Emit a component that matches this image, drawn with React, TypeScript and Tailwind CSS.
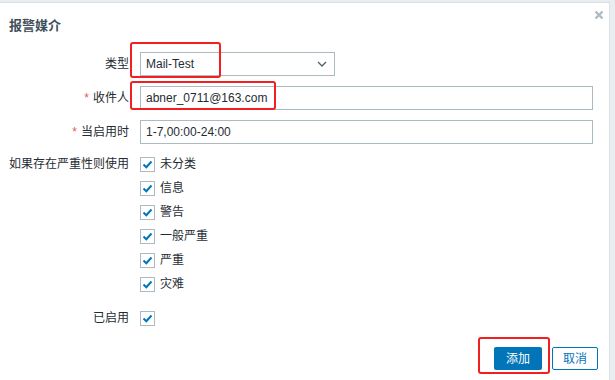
import React from 'react'

const severities = ['未分类', '信息', '警告', '一般严重', '严重', '灾难']

function CheckBox() {
  return (
    <span className="flex h-[15px] w-[15px] shrink-0 items-center justify-center border border-[#acbbc2] bg-white">
      <svg width="11" height="9" viewBox="0 0 11 9">
        <path d="M1.5 4.5 L4.3 7.2 L9.5 1.5" fill="none" stroke="#0275b8" strokeWidth="2" />
      </svg>
    </span>
  )
}

function Label({ text, required }: { text: string; required?: boolean }) {
  return (
    <div className="w-[130px] shrink-0 pr-[1px] text-right leading-[24px]">
      {required && <span className="mr-[4px] text-[#e45959]">*</span>}
      {text}
    </div>
  )
}

export default function App() {
  return (
    <div
      className="relative h-[380px] w-[615px] overflow-hidden bg-[#e9edf0] pt-[2px] pr-[5px]"
      style={{ fontFamily: '"Liberation Sans", Arial, "Noto Sans CJK SC", sans-serif' }}
    >
      <div className="relative h-[378px] border-t border-r border-[#d9dfe3] bg-white text-[12px] text-[#1f2c33]">
        {/* Header */}
        <div className="flex h-[40px] items-center pl-[9px] pt-[6px]">
          <h4 className="text-[13px] font-bold text-[#3f4f59]">报警媒介</h4>
        </div>
        <button className="absolute right-[5px] top-[7px] flex h-[10px] w-[10px] items-center justify-center">
          <svg width="10" height="10" viewBox="0 0 10 10">
            <path d="M1.5 1.5 L8.5 8.5 M8.5 1.5 L1.5 8.5" stroke="#aebbc3" strokeWidth="2.4" />
          </svg>
        </button>

        {/* Form */}
        <div className="flex flex-col pt-[9px]">
          <div className="flex items-center">
            <Label text="类型" />
            <div className="ml-[10px] flex h-[24px] w-[195px] items-center justify-between border border-[#acbbc2] pl-[5px] pr-[7px]">
              <span>Mail-Test</span>
              <svg width="10" height="6" viewBox="0 0 10 6">
                <path d="M1 1 L5 5 L9 1" fill="none" stroke="#4f5f6a" strokeWidth="1.3" />
              </svg>
            </div>
          </div>

          <div className="mt-[10px] flex items-center">
            <Label text="收件人" required />
            <div className="ml-[10px] flex h-[24px] w-[453px] items-center border border-[#acbbc2] pl-[5px]">
              abner_0711@163.com
            </div>
          </div>

          <div className="mt-[10px] flex items-center">
            <Label text="当启用时" required />
            <div className="ml-[10px] flex h-[24px] w-[453px] items-center border border-[#acbbc2] pl-[5px]">
              1-7,00:00-24:00
            </div>
          </div>

          <div className="mt-[13px] flex items-start">
            <div className="w-[130px] shrink-0 pr-[1px] text-right leading-[15px]">如果存在严重性则使用</div>
            <div className="ml-[10px] flex flex-col gap-[9px]">
              {severities.map(s => (
                <div key={s} className="flex items-center gap-[5px] leading-[15px]">
                  <CheckBox />
                  <span>{s}</span>
                </div>
              ))}
            </div>
          </div>

          <div className="mt-[19px] flex items-center">
            <div className="w-[130px] shrink-0 pr-[1px] text-right leading-[15px]">已启用</div>
            <div className="ml-[10px]">
              <CheckBox />
            </div>
          </div>
        </div>

        {/* Footer buttons */}
        <div className="absolute right-[11px] top-[344px] flex gap-[10px]">
          <button className="h-[23px] w-[48px] rounded-[2px] bg-[#0275b8] text-[12px] text-white">添加</button>
          <button className="h-[23px] w-[46px] rounded-[2px] border border-[#0275b8] bg-white text-[12px] text-[#0275b8]">取消</button>
        </div>
      </div>

      {/* Red annotation boxes */}
      <div className="pointer-events-none absolute left-[130px] top-[42px] h-[36px] w-[91px] rounded-[3px] border-2 border-[#f02020]" />
      <div className="pointer-events-none absolute left-[130px] top-[81px] h-[29px] w-[146px] rounded-[3px] border-2 border-[#f02020]" />
      <div className="pointer-events-none absolute left-[478px] top-[337px] h-[37px] w-[72px] rounded-[3px] border-2 border-[#f02020]" />
    </div>
  )
}
